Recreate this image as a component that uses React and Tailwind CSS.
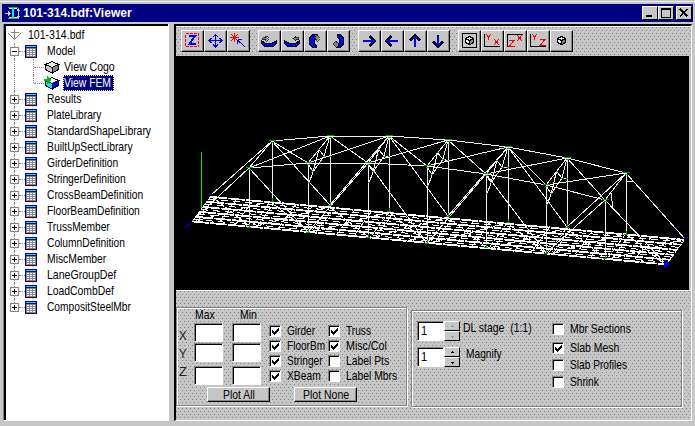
import React, { useLayoutEffect, useRef } from "react";

const DITHER =
  "bg-[#c6c6c6] [background-image:conic-gradient(from_0deg_at_1px_1px,transparent_270deg,#848484_0),conic-gradient(from_0deg_at_1px_1px,transparent_270deg,#848484_0)] [background-size:4px_6px,4px_6px] [background-position:0_0,2px_3px]";

/* Condensed label: the glyph run is squeezed to w pixels. */
function T({ w, children, className = "" }) {
  const ref = useRef(null);
  useLayoutEffect(() => {
    const el = ref.current;
    el.style.transform = `scaleX(${w / el.offsetWidth})`;
  }, [w]);
  return (
    <span className="block shrink-0 overflow-visible" style={{ width: w }}>
      <span ref={ref} className={`inline-block origin-left whitespace-pre ${className}`}>
        {children}
      </span>
    </span>
  );
}

function Svg({ w, h, children, box, className = "" }) {
  return (
    <svg width={w} height={h} viewBox={box || `0 0 ${w} ${h}`} shapeRendering="crispEdges" fill="none" className={`block shrink-0 ${className}`}>
      {children}
    </svg>
  );
}

function TableIcon() {
  return (
    <Svg w={12} h={13}>
      <rect width="12" height="13" fill="#000084" />
      <rect x="1" y="1" width="10" height="1" fill="#00e0ff" />
      <rect x="1" y="3" width="10" height="9" fill="#848484" />
      {[4, 6, 8, 10].map((y) =>
        [2, 5, 8].map((x) => <rect key={`${x}-${y}`} x={x} y={y} width="2" height="1" fill="#fff" />)
      )}
    </Svg>
  );
}

function Cube({ colored }) {
  return (
    <Svg w={16} h={14}>
      <path d="M1.5 4.5L8 1.5L14.5 4.5L8 7.5Z" fill={colored ? "#fff" : "#e8e8e8"} stroke="#000" />
      <path d="M1.5 4.5L8 7.5V13L1.5 9.5Z" fill={colored ? "#00e8ff" : "#c6c6c6"} stroke="#000" />
      <path d="M14.5 4.5L8 7.5V13L14.5 9.5Z" fill={colored ? "#0000ff" : "#848484"} stroke="#000" />
      {colored && <path d="M0 3H3V0L7 4L3 8V5H0Z" fill="#00c000" />}
    </Svg>
  );
}

function Expander({ open }) {
  return (
    <Svg w={9} h={9}>
      <rect x=".5" y=".5" width="8" height="8" fill="#fff" stroke="#848484" />
      <path d={open ? "M2 4.5H7" : "M2 4.5H7M4.5 2V7"} stroke="#000" />
    </Svg>
  );
}

const NODES = [
  ["Results", 34], ["PlateLibrary", 54], ["StandardShapeLibrary", 104], ["BuiltUpSectLibrary", 86],
  ["GirderDefinition", 71], ["StringerDefinition", 79], ["CrossBeamDefinition", 96],
  ["FloorBeamDefinition", 93], ["TrussMember", 63], ["ColumnDefinition", 78], ["MiscMember", 59],
  ["LaneGroupDef", 69], ["LoadCombDef", 67], ["CompositSteelMbr", 84],
];

function Branch({ label, w, open, last }) {
  return (
    <div className="flex h-4 items-center">
      <div className="flex h-4 w-[9px] flex-col items-center">
        <div className="h-[4px] w-px border-l border-dotted border-[#848484]" />
        <Expander open={open} />
        {!last && <div className="h-[3px] w-px border-l border-dotted border-[#848484]" />}
      </div>
      <div className="w-[6px] border-t border-dotted border-[#848484]" />
      <TableIcon />
      <div className="w-[10px]" />
      <T w={w}>{label}</T>
    </div>
  );
}

function Leaf({ label, w, colored, last }) {
  return (
    <div className="flex h-4 items-center">
      <div className="ml-1 h-4 w-[19px] border-l border-dotted border-[#848484]" />
      <div className={`w-px self-start border-l border-dotted border-[#848484] ${last ? "h-2" : "h-4"}`} />
      <div className="w-[10px] border-t border-dotted border-[#848484]" />
      <Cube colored={colored} />
      <div
        className={`ml-[3px] flex h-4 items-center pr-[2px] ${
          colored ? "border border-dotted border-[#ffff60] bg-[#000084] text-white" : "border border-transparent"
        }`}
      >
        <T w={w}>{label}</T>
      </div>
    </div>
  );
}

function Tree() {
  return (
    <div className="flex w-[164px] flex-col border-l-2 border-t-2 border-l-black border-t-black bg-white pl-1 pt-px">
      <div className="flex h-4 items-center">
        <Svg w={15} h={16} className="-ml-0.5">
          <path d="M6.5 2V13M3 5.500H11M.5 6.5L6.5 12.5L12.5 6.5" stroke="#848484" strokeWidth="1.2" />
        </Svg>
        <div className="w-[5px]" />
        <T w={56}>101-314.bdf</T>
      </div>
      <Branch label="Model" w={28} open />
      <Leaf label="View Cogo" w={51} />
      <Leaf label="View FEM" w={47} colored last />
      {NODES.map(([label, w], i) => (
        <Branch key={label} label={label} w={w} last={i === NODES.length - 1} />
      ))}
    </div>
  );
}

const small = (
  <>
    <path d="M7.500 8.500L11.500 6.500L15.500 8.500V12.500L11.500 14.500L7.500 12.500Z" fill="#f4f4f4" stroke="#000" />
    <path d="M12 10.500L15 9V12L12 14Z" fill="#848484" />
    <path d="M7.500 8.500L11.500 10.500V14.500M11.500 10.500L15.500 8.500" stroke="#000" />
  </>
);
const arrow = (r) => (
  <g transform={`rotate(${r} 11 11)`}>
    <path d="M5 11H17M11.500 6L16.500 11L11.500 16" stroke="#000" strokeWidth="2.400" />
    <path d="M5.500 11H16M12 7L16 11L12 15" stroke="#0000ff" strokeWidth="1.200" />
  </g>
);
const swing = (
  <>
    <path d="M3.500 10.500L7 13H14.500L18.500 10.500V13.500L15 16.500H7L3.500 13.500Z" fill="#0000ff" stroke="#000" />
    <path d="M4.500 9.500V7.500L7.500 7.500V6L10.500 8.500L7.500 11V9.500Z" fill="#848484" stroke="#000" strokeWidth=".7" />
  </>
);
const curl = (
  <>
    <path d="M13 4.500H9L5.500 8V14L9 17.500H12V15.500L10 13V9L13 7Z" fill="#0000ff" stroke="#000" />
    <path d="M12 4.500L16 8L12.500 11V9.500H11V6Z" fill="#848484" stroke="#000" strokeWidth=".7" />
  </>
);
const X = (x, y) => <path d={`M${x} ${y}L${x + 5} ${y + 6}M${x + 5} ${y}L${x} ${y + 6}`} stroke="#f00" strokeWidth="1.1" />;
const Y = (x, y) => <path d={`M${x} ${y}L${x + 2.5} ${y + 3}L${x + 5} ${y}M${x + 2.5} ${y + 3}V${y + 6}`} stroke="#f00" strokeWidth="1.1" />;
const Z = (x, y) => <path d={`M${x} ${y + 0.5}H${x + 5}L${x} ${y + 6.5}H${x + 5.5}`} stroke="#f00" strokeWidth="1.1" />;

const TOOLS = [
  [
    <>
      <rect x="4.5" y="3.5" width="13" height="13" stroke="#f00" strokeDasharray="3 1" />
      <path d="M7.500 6H14L8.500 14H15" stroke="#0000ff" strokeWidth="2" />
    </>,
    <path d="M11.500 4.500V17M5 10.500H18M9 7L11.500 4.500L14 7M9 14.500L11.500 17L14 14.500M7.500 8L5 10.500L7.500 13M15.500 8L18 10.500L15.500 13" stroke="#0000ff" strokeWidth="1.2" />,
    <>
      <path d="M3 7.500H12M7.500 3V12M4 4L11 11M11 4L4 11" stroke="#f00" />
      <path d="M11 10L18 17M10.500 10V14M10.500 9.500H15M11 11L13 13" stroke="#0000ff" strokeWidth="1.3" />
    </>,
  ],
  [swing, <g transform="translate(22 0) scale(-1 1)">{swing}</g>, curl, <g transform="rotate(180 11 11)">{curl}</g>],
  [arrow(0), arrow(180), arrow(-90), arrow(90)],
  [
    <>
      <rect x="4.5" y="3.5" width="14" height="14" stroke="#000" />
      {small}
    </>,
    <>
      <path d="M3.5 4V16.5H19" stroke="#000" />
      {Y(5, 4)}
      {X(13, 9)}
    </>,
    <>
      <path d="M3.5 17V4.5H19" stroke="#000" />
      {Z(5, 10)}
      {X(13, 5)}
    </>,
    <>
      <path d="M3.5 4V16.5H19" stroke="#000" />
      {Y(5, 4)}
      {Z(13, 9)}
    </>,
    small,
  ],
];

function Toolbar() {
  return (
    <div className={`flex h-[30px] gap-2 border-t border-white pl-[5px] pt-[3px] ${DITHER}`}>
      {TOOLS.map((group, g) => (
        <div key={g} className="flex">
          {group.map((icon, i) => (
            <button
              key={i}
              className="block h-[22px] w-[23px] border-b border-l border-r border-t border-b-black border-l-white border-r-black border-t-white bg-[#c6c6c6] shadow-[inset_-1px_-1px_0_#848484]"
            >
              <Svg w={21} h={20} box="1 1 21 20">
                {icon}
              </Svg>
            </button>
          ))}
        </div>
      ))}
    </div>
  );
}

/* Truss joints, in window coordinates. */
const BACK = [[211, 195], [272, 141], [330, 136], [389, 136], [448, 140], [508, 147], [567, 158], [626, 173], [685, 239]];
const FRONT = [[192, 221], [249, 168], [308, 163], [368, 163], [427, 166], [486, 174], [546, 185], [605, 200], [666, 264]];
const backBase = [[211, 196], [272, 201], [330, 205], [389, 211], [448, 216], [508, 222], [567, 227], [626, 234], [685, 239]];
const frontBase = [[192, 222], [249, 227], [308, 232], [368, 237], [427, 243], [486, 247], [546, 253], [605, 258], [666, 265]];
const seg = (a, b) => `M${a[0]} ${a[1]}L${b[0]} ${b[1]}`;
const mix = (a, b, t) => [a[0] + (b[0] - a[0]) * t, a[1] + (b[1] - a[1]) * t];
const deck = (u, v) => [211 - 19 * v + 474 * u, 196 + 26 * v + 43 * u];

function trussPath() {
  const d = [];
  for (let i = 0; i < 8; i++) {
    d.push(seg(BACK[i], BACK[i + 1]), seg(FRONT[i], FRONT[i + 1]));
    if (i > 0 && i < 7) d.push(seg(BACK[i], FRONT[i + 1]), seg(FRONT[i], BACK[i + 1]));
  }
  for (let i = 1; i < 8; i++) {
    d.push(seg(BACK[i], backBase[i]), seg(FRONT[i], frontBase[i]), seg(BACK[i], FRONT[i]));
    if (i % 2) {
      if (i > 1) d.push(seg(backBase[i - 1], BACK[i]), seg(frontBase[i - 1], FRONT[i]));
      if (i < 7) d.push(seg(BACK[i], backBase[i + 1]), seg(FRONT[i], frontBase[i + 1]));
    }
    if (i > 1 && i < 7) {
      const [bx, by] = BACK[i];
      const [fx, fy] = FRONT[i];
      const m = mix(BACK[i], FRONT[i], 0.5);
      d.push(`M${bx} ${by}L${fx + 16} ${fy - 7}L${m[0]} ${m[1]}L${fx + 5} ${fy + 9}L${fx} ${fy}`);
      d.push(`M${fx + 1} ${fy + 20}L${fx + 5} ${fy + 9}L${fx + 16} ${fy - 7}L${bx} ${by + 21}`);
    }
  }
  d.push("M611 193L613 209M626 181L634 182");
  return d.join("");
}

function deckPaths() {
  const thick = [];
  const thin = [];
  const cross = [];
  [0.03, 0.22, 0.42, 0.61, 0.8, 0.98].forEach((v) => thick.push(seg(deck(0, v), deck(1, v))));
  [0.12, 0.32, 0.52, 0.7, 0.9].forEach((v) => thin.push(seg(deck(0, v), deck(1, v))));
  for (let i = 0; i <= 8; i++) {
    const u = i / 8;
    cross.push(seg(deck(u, 0), deck(u, 1)));
    if (i < 8) {
      const n = (i + 1) / 8;
      cross.push(seg(deck(u + 0.01, 0), deck(u + 0.01, 1)), seg(deck(u + 0.055, 0), deck(u + 0.055, 1)), seg(deck(u + 0.09, 0), deck(u + 0.09, 1)));
      cross.push(seg(deck(u, 0), deck(n, 1)), seg(deck(u, 1), deck(n, 0)));
    }
  }
  return [thick.join(""), thin.join(""), cross.join("")];
}

function Model() {
  const [thick, thin, cross] = deckPaths();
  const joints = [...BACK.slice(1, 8), ...FRONT.slice(1, 8)];
  const feet = [...backBase.slice(1, 8), ...frontBase.slice(1, 8)];
  return (
    <svg width="513" height="234" viewBox="176 56 513 234" shapeRendering="crispEdges" fill="none" className="block bg-black">
      <path d={thin} stroke="#fff" strokeDasharray="7 5" />
      <path d={cross} stroke="#fff" strokeDasharray="5 1" />
      <path d={thick} stroke="#fff" strokeWidth="1.8" strokeDasharray="17 1" />
      <path d={trussPath()} stroke="#f0f0f0" />
      <path d="M201.5 152V208" stroke="#00e800" />
      {joints.map(([x, y]) => (
        <path key={`${x}-${y}`} d={`M${x - 3} ${y - 0.5}H${x + 4}M${x - 1} ${y + 1.5}H${x + 2}`} stroke="#00a000" />
      ))}
      {feet.map(([x, y]) => (
        <path key={`${x}-${y}`} d={`M${x - 2} ${y + 0.5}H${x + 2}M${x + 0.5} ${y - 3}V${y + 1}`} stroke="#00a000" />
      ))}
      {BACK.slice(2, 7).map(([x, y], i) => {
        const [fx, fy] = FRONT[i + 2];
        return (
          <path key={x} d={`M${fx + 10} ${fy - 13.5}h2M${fx + 15} ${fy - 6.5}h3M${x - 1} ${y + 20.5}h2M${fx + 4} ${fy + 8.5}h2M${fx} ${fy + 19.5}h2`} stroke="#00a000" />
        );
      })}
      {frontBase.slice(1, 8).map(([x, y]) => (
        <path key={x} d={`M${x + 6} ${y - 6.5}h1M${x + 10} ${y - 12.5}h1M${x + 15} ${y - 18.5}h1`} stroke="#00a000" />
      ))}
      <path d="M208 194.5H212M191 222L186 228M684.5 236V241" stroke="#00f" />
      <path d="M192 220.5h2" stroke="#00a000" />
      <path d="M664 262h4v1h1v3h-3v2h-2z" fill="#00f" />
    </svg>
  );
}

const SUNK = "border-b border-l border-r border-t border-b-white border-l-[#848484] border-r-white border-t-[#848484]";

function Field({ children, className }) {
  return (
    <div className={`shrink-0 bg-white shadow-[inset_1px_1px_0_#000] ${SUNK} ${className}`}>{children}</div>
  );
}

function Check({ label, w, on, className = "" }) {
  return (
    <div className={`flex h-3 items-center ${className}`}>
      <div className={`h-3 w-3 shrink-0 bg-white shadow-[inset_1px_1px_0_#000] ${SUNK}`}>
        {on && (
          <Svg w={10} h={10}>
            <path d="M2 4h1v1h1v1h1v-1h1v-1h1v-1h1v-1h1v3h-1v1h-1v1h-1v1h-1v1h-1v-1h-1v-1h-1z" fill="#000" />
          </Svg>
        )}
      </div>
      <div className="w-[6px]" />
      <T w={w}>{label}</T>
    </div>
  );
}

function Push({ label, w, className = "" }) {
  return (
    <button className={`flex h-[15px] w-[63px] items-center justify-center border-b border-l border-r border-t border-b-black border-l-white border-r-black border-t-white bg-[#c6c6c6] shadow-[inset_-1px_-1px_0_#848484] ${className}`}>
      <T w={w}>{label}</T>
    </button>
  );
}

function Spin({ dim, up }) {
  return (
    <button className="flex h-[10px] w-4 items-center justify-center border-b border-l border-r border-t border-b-black border-l-white border-r-black border-t-white bg-[#c6c6c6]">
      <Svg w={5} h={3}>
        <path d={up ? "M2 0h1v1h1v1h-3v-1h1z" : "M1 1h3v1h-1v1h-1v-1h-1z"} fill={dim ? "#949494" : "#000"} />
      </Svg>
    </button>
  );
}

function Spinner({ label, w, dim, gap }) {
  return (
    <div className="flex h-5">
      <Field className="h-5 w-[27px] pl-[3px] pt-[2px]">
        <T w={6}>1</T>
      </Field>
      <div className="flex flex-col">
        <Spin dim={dim} up />
        <Spin dim={dim} />
      </div>
      <div className={gap} />
      <T w={w}>{label}</T>
    </div>
  );
}

const FRAME = "border border-[#848484] shadow-[inset_1px_1px_0_#fff,1px_1px_0_#fff]";

function Limits() {
  return (
    <div className={`mt-[16px] h-[99px] w-[231px] ${FRAME}`}>
      <div className="flex h-[79px] pl-[2px]">
        <div className="flex w-[15px] flex-col pt-[19px] leading-[18px]">
          <T w={8} className="text-[#222]">X</T>
          <T w={8} className="text-[#222]">Y</T>
          <T w={8} className="text-[#222]">Z</T>
        </div>
        <div className="flex w-[38px] flex-col">
          <div className="h-[15px] pl-[1px]"><T w={20}>Max</T></div>
          <Field className="h-[19px] w-[29px]" />
          <Field className="mt-px h-[19px] w-[29px]" />
          <Field className="mt-[4px] h-[19px] w-[29px]" />
        </div>
        <div className="flex w-[37px] flex-col">
          <div className="h-[15px] pl-[8px]"><T w={17}>Min</T></div>
          <Field className="h-[19px] w-[29px]" />
          <Field className="mt-px h-[19px] w-[29px]" />
          <Field className="mt-[4px] h-[19px] w-[29px]" />
        </div>
        <div className="flex w-[59px] flex-col gap-[3px] pt-[17px]">
          <Check label="Girder" w={28} on />
          <Check label="FloorBm" w={38} on />
          <Check label="Stringer" w={36} on />
          <Check label="XBeam" w={34} on />
        </div>
        <div className="flex flex-col gap-[3px] pt-[17px]">
          <Check label="Truss" w={25} on />
          <Check label="Misc/Col" w={41} on />
          <Check label="Label Pts" w={43} />
          <Check label="Label Mbrs" w={51} />
        </div>
      </div>
      <div className="flex gap-6 pl-[30px]">
        <Push label="Plot All" w={32} />
        <Push label="Plot None" w={46} />
      </div>
    </div>
  );
}

function Display() {
  return (
    <div className={`ml-1 mt-[19px] flex h-[97px] w-[271px] pl-[5px] pt-[10px] ${FRAME}`}>
      <div className="flex w-[135px] flex-col gap-[6px]">
        <Spinner label="DL stage  (1:1)" w={69} dim gap="w-[3px]" />
        <Spinner label="Magnify" w={36} gap="w-[6px]" />
      </div>
      <div className="flex flex-col pt-[2px]">
        <Check label="Mbr Sections" w={61} />
        <Check label="Slab Mesh" w={49} on className="mt-[7px]" />
        <Check label="Slab Profiles" w={57} className="mt-[5px]" />
        <Check label="Shrink" w={29} className="mt-[5px]" />
      </div>
    </div>
  );
}

const CAP = "block h-[14px] w-4 border-b border-l border-r border-t border-b-black border-l-white border-r-black border-t-white bg-[#c6c6c6]";

function TitleBar() {
  return (
    <div className="mx-[2px] flex h-[18px] items-center bg-[#000084] pl-[3px] text-white">
      <Svg w={16} h={14}>
        <path d="M3 1.500H13M3 12.5H13" stroke="#00c040" />
        <path d="M4 2.500H12M4 11.5H12" stroke="#ffff40" />
        <path d="M8 2V12" stroke="#00e8ff" strokeWidth="2" />
        <path d="M0 7.5H5M3 5.5L5 7.5L3 9.5M13.5 3V12M12 5L13.5 3L15 5M12 10L13.5 12L15 10" stroke="#c6c6c6" />
      </Svg>
      <div className="w-[2px]" />
      <T w={109} className="text-[13px] font-bold">101-314.bdf:Viewer</T>
      <div className="grow" />
      <div className="flex pr-px">
        <div className={CAP}><Svg w={14} h={12}><path d="M3 9H9" stroke="#000" strokeWidth="2" /></Svg></div>
        <div className={CAP}><Svg w={14} h={12}><path d="M2.5 1.5H11.5V10.5H2.5ZM2 2.5H12" stroke="#000" /></Svg></div>
        <div className={`ml-[2px] ${CAP}`}><Svg w={14} h={12}><path d="M3 2L10.500 9.500M10.500 2L3 9.500" stroke="#000" strokeWidth="1.500" /></Svg></div>
      </div>
    </div>
  );
}

export default function App() {
  return (
    <div className="h-[426px] w-[695px] overflow-hidden bg-[#c6c6c6] pt-1 font-['Liberation_Sans',Arial,sans-serif] text-[13px] leading-[14px] text-black shadow-[inset_0_1px_0_#c6c6c6,inset_0_2px_0_#efefef]">
      <TitleBar />
      <div className="flex h-[399px] pl-[3px] pt-[2px]">
        <div className="flex h-[397px] border-b border-l border-r border-b-white border-l-[#848484] border-r-white">
          <Tree />
        </div>
        <div className="w-[5px]" />
        <div className="flex h-[397px] w-[518px] flex-col border-b border-l-2 border-r border-t-2 border-b-white border-l-black border-r-white border-t-black">
          <Toolbar />
          <div className="bg-[#c6c6c6]">
            <Model />
          </div>
          <div className={`flex grow border-t border-white ${DITHER}`}>
            <Limits />
            <Display />
          </div>
        </div>
      </div>
    </div>
  );
}
